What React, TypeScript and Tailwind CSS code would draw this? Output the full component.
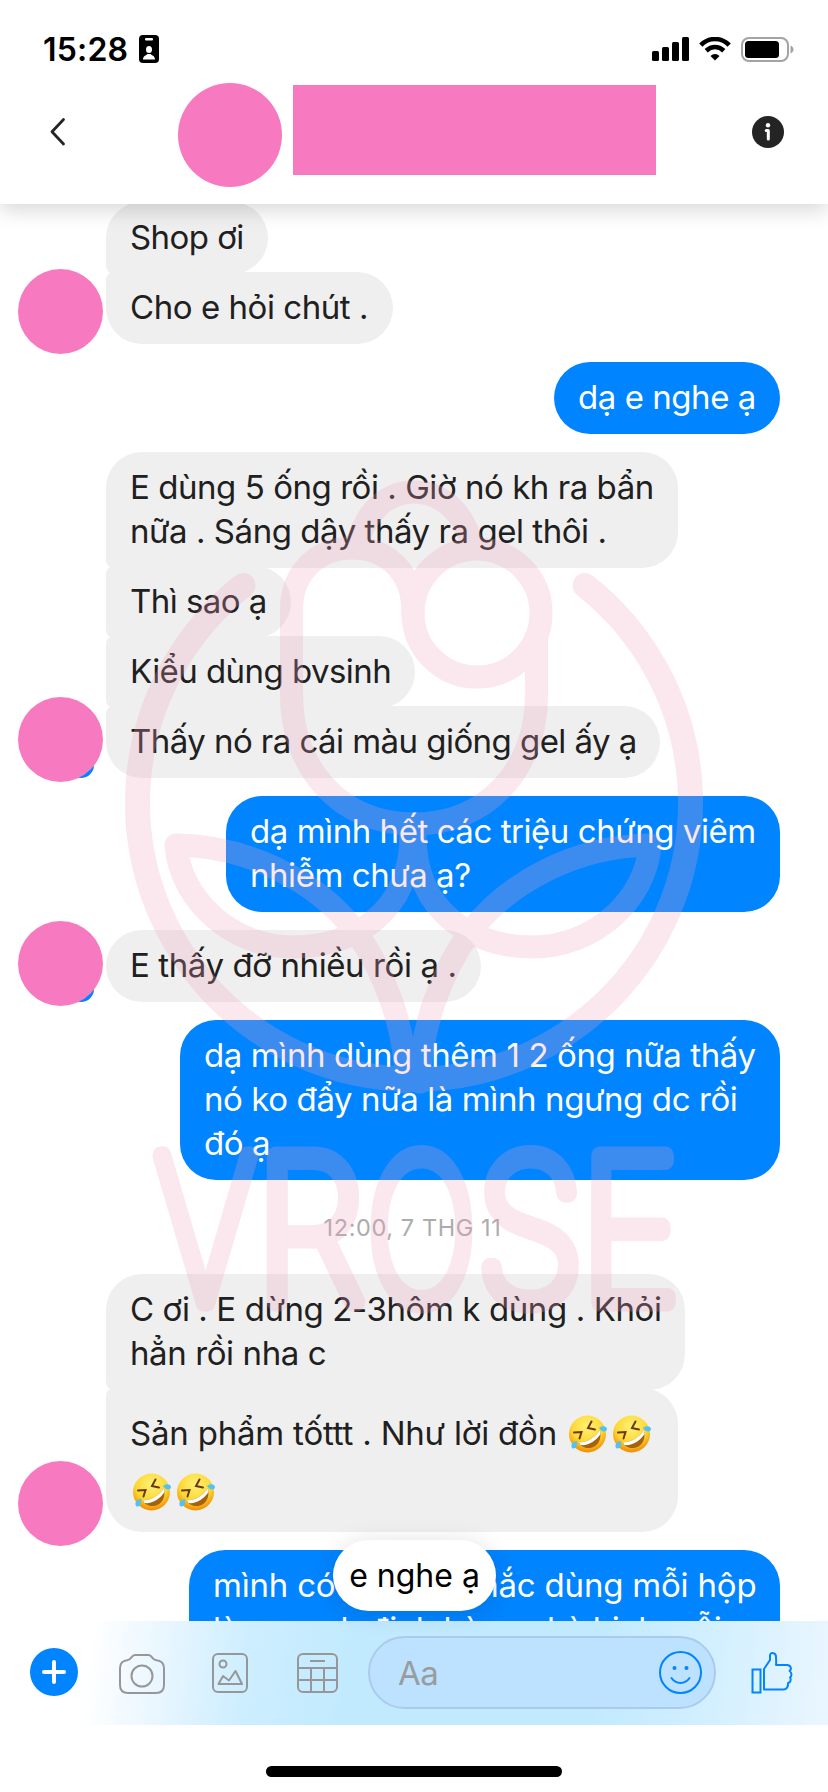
import type { ReactNode } from "react";
import clsx from "clsx";

// ─── MESSAGE DATA ──────────────────────────────────────────────────────────
// width    → bubble width, as a full Tailwind class
// tracking → letter spacing of the bubble's text
type Message = { lines: ReactNode[]; width: string; tracking?: string; tall?: boolean };
type Group = { messages: Message[]; avatar: string; badge?: boolean };

const FIRST: Group = {
  avatar: "-bottom-[10px]",
  messages: [
    { lines: ["Shop ơi"], width: "w-[162px]", tracking: "tracking-[-0.550px]" },
    { lines: ["Cho e hỏi chút ."], width: "w-[287px]" },
  ],
};

const SECOND: Group = {
  avatar: "-bottom-[4px]",
  badge: true,
  messages: [
    {
      lines: ["E dùng 5 ống rồi . Giờ nó kh ra bẩn", "nữa . Sáng dậy thấy ra gel thôi ."],
      width: "w-[572px]",
    },
    { lines: ["Thì sao ạ"], width: "w-[185px]", tracking: "tracking-[-0.550px]" },
    { lines: ["Kiểu dùng bvsinh"], width: "w-[309px]", tracking: "tracking-[-0.550px]" },
    { lines: ["Thấy nó ra cái màu giống gel ấy ạ"], width: "w-[554px]", tracking: "tracking-[-0.550px]" },
  ],
};

const THIRD: Group = {
  avatar: "-bottom-[4px]",
  badge: true,
  messages: [{ lines: ["E thấy đỡ nhiều rồi ạ ."], width: "w-[375px]", tracking: "tracking-[-0.400px]" }],
};

const FOURTH: Group = {
  avatar: "-bottom-[14px]",
  messages: [
    {
      lines: ["C ơi . E dừng 2-3hôm k dùng . Khỏi", "hẳn rồi nha c"],
      width: "w-[579px]",
      tracking: "tracking-[-0.400px]",
    },
    {
      lines: [
        <>
          Sản phẩm tốttt . Như lời đồn <Rofl />
          <Rofl />
        </>,
        <>
          <Rofl />
          <Rofl />
        </>,
      ],
      width: "w-[572px]",
      tracking: "tracking-[-0.200px]",
      tall: true,
    },
  ],
};

// ─── EMOJI ─────────────────────────────────────────────────────────────────
function Rofl() {
  return (
    <svg viewBox="0 0 40 40" className="mr-[2px] ml-[2px] inline-block size-10 align-[-9px]" aria-label="🤣">
      <defs>
        <radialGradient id="face" cx="0.5" cy="0.3" r="0.7">
          <stop offset="0" stopColor="#fff27a" />
          <stop offset="0.6" stopColor="#fdd835" />
          <stop offset="1" stopColor="#f08c00" />
        </radialGradient>
      </defs>
      <circle cx="19.5" cy="20" r="18.5" fill="url(#face)" />
      <path d="M11 28 C18 29 27 24 32 16 C34 25 30 33 22 34 C17 34.500 12 32 11 28Z" fill="#a5620c" />
      <path d="M11 28 C18 29 27 24 32 16 L32.500 20 C28 27 20 32 12.500 31Z" fill="#fff" />
      <path d="M6 18.500 L13.500 18 L11.500 24.500" fill="none" stroke="#6b3a06" strokeWidth="2" strokeLinecap="round" />
      <path d="M23.500 7.500 L20 14 L27 15.500" fill="none" stroke="#6b3a06" strokeWidth="2" strokeLinecap="round" />
      <path d="M31 14 C34 11 39 12 39 15 C39 18 34 19 31 14Z" fill="#4fc3f7" />
      <path d="M9 27 C5 27 2 31 4 34 C7 36 10 32 9 27Z" fill="#4fc3f7" />
    </svg>
  );
}

// ─── BUBBLES ───────────────────────────────────────────────────────────────
function Bubble({ message, mine, className }: { message: Message; mine?: boolean; className?: string }) {
  return (
    <div
      className={clsx(
        "shrink-0 pl-6 whitespace-nowrap text-[33px]",
        message.width,
        message.tracking ?? "tracking-[-0.450px]",
        message.tall ? "pt-[16px] pb-[12px] leading-[58px]" : "pt-[13px] pb-[15px] leading-[44px]",
        mine ? "self-end bg-[#0084ff] text-white" : "bg-[#efefef] text-[#202020]",
        className,
      )}
    >
      {message.lines.map((line, i) => (
        <div key={i} className={message.tall ? "h-[58px]" : "h-[44px]"}>
          {line}
        </div>
      ))}
    </div>
  );
}

function Received({ group, className }: { group: Group; className?: string }) {
  const last = group.messages.length - 1;
  return (
    <div className={clsx("relative flex shrink-0 flex-col items-start pl-[106px]", className)}>
      {group.messages.map((m, i) => (
        <Bubble
          key={i}
          message={m}
          className={clsx(
            "rounded-r-[36px]",
            i > 0 ? "-mt-[2px] rounded-tl-[8px]" : "rounded-tl-[36px]",
            i < last ? "rounded-bl-[8px]" : "rounded-bl-[36px]",
          )}
        />
      ))}
      {group.badge && <span className="absolute bottom-0 left-[68px] size-[26px] rounded-full bg-[#0084ff]" />}
      <span className={clsx("absolute left-[18px] size-[85px] rounded-full bg-[#f77ac1]", group.avatar)} />
    </div>
  );
}

function Sent({ message, className }: { message: Message; className?: string }) {
  return <Bubble message={message} mine className={clsx("mr-12 rounded-[36px]", className)} />;
}

// ─── STATUS BAR ────────────────────────────────────────────────────────────
function StatusBar() {
  return (
    <div className="flex h-[62px] items-end justify-between pr-[34px] pl-[43px]">
      <div className="flex items-end gap-[11px]">
        <span className="-mb-[7px] w-[85px] text-[32px] leading-[38px] font-semibold tracking-[0.200px] text-black">15:28</span>
        <svg width="20" height="28" viewBox="0 0 20 28" className="-mb-[1px]">
          <rect width="20" height="28" rx="4" fill="#000" />
          <rect x="6" y="3" width="8" height="2.500" rx="1" fill="#fff" />
          <ellipse cx="10" cy="14.500" rx="3" ry="3.500" fill="#fff" />
          <path d="M4 24.500 C4 21 7 20.500 8.500 19 H11.500 C13 20.500 16 21 16 24.500Z" fill="#fff" />
        </svg>
      </div>
      <div className="flex items-end gap-[10px]">
        <svg width="37" height="24" viewBox="0 0 37 24" className="mb-[1px]">
          <rect x="0" y="14" width="7" height="10" rx="1.500" />
          <rect x="10" y="10" width="7" height="14" rx="1.500" />
          <rect x="20" y="5" width="7" height="19" rx="1.500" />
          <rect x="30" y="0" width="7" height="24" rx="1.500" />
        </svg>
        <svg width="32" height="24" viewBox="0 0 32 24" className="mb-[1px]" fill="none" stroke="#000">
          <path d="M1.800 8.200 C10 0 22 0 30.200 8.200" strokeWidth="4.600" />
          <path d="M7.200 13.700 C12.500 8.800 19.500 8.800 24.800 13.700" strokeWidth="4.600" />
          <path d="M11.500 19 C14 16.300 18 16.300 20.500 19 L16 23.500Z" fill="#000" stroke="none" />
        </svg>
        <svg width="53" height="25" viewBox="0 0 53 25">
          <rect x="1" y="1" width="46" height="23" rx="7" fill="none" stroke="#a3a3a3" strokeWidth="2" />
          <rect x="4" y="4" width="34" height="17" rx="3.500" />
          <path d="M49.500 8.500 C53.500 10 53.500 15 49.500 16.500Z" fill="#a3a3a3" />
        </svg>
      </div>
    </div>
  );
}

// ─── HEADER ────────────────────────────────────────────────────────────────
function Header() {
  return (
    <header className="relative z-10 h-[204px] bg-white shadow-[0_6px_20px_rgba(0,0,0,0.16)]">
      <StatusBar />
      <div className="flex h-[142px] items-start">
        <svg width="18" height="30" viewBox="0 0 18 30" className="mt-[55px] ml-[49px]" fill="none" stroke="#242424" strokeWidth="2.800" strokeLinecap="round" strokeLinejoin="round">
          <path d="M14.500 2.500 L3 14.700 L14.500 27" />
        </svg>
        <span className="mt-[21px] ml-[111px] size-[104px] rounded-full bg-[#f77ac1]" />
        <span className="mt-[23px] ml-[11px] h-[90px] w-[363px] bg-[#f77ac1]" />
        <svg width="32" height="32" viewBox="0 0 32 32" className="mt-[54px] ml-[96px]">
          <circle cx="16" cy="16" r="16" fill="#242424" />
          <circle cx="16" cy="9.300" r="2.200" fill="#fff" />
          <path d="M14.200 14.500 H16.300 V23" fill="none" stroke="#fff" strokeWidth="3" strokeLinecap="round" strokeLinejoin="round" />
        </svg>
      </div>
    </header>
  );
}

// ─── WATERMARK ─────────────────────────────────────────────────────────────
// Rose emblem with the brand name under it, laid over the conversation.
const HALF_LEAF =
  "M176 845 C250 846 318 882 356 932 C385 972 406 1030 406 1082 M176 845 C180 900 232 947 293 947 C350 947 411 915 411 835";

function Watermark() {
  return (
    <svg viewBox="0 0 828 1792" className="pointer-events-none absolute top-0 left-0 z-[5] h-[1792px] w-[828px] opacity-25">
      <g fill="none" stroke="#f0a2be" strokeWidth="23" strokeLinecap="round" strokeLinejoin="round">
        <path d="M243 585.500 A276.500 276.500 0 1 0 585 585.500" strokeWidth="25" />
        <path d="M357 545 C366 510 388 492 414 492 C440 492 463 510 472 545" strokeLinecap="butt" />
        <path d="M413 612 C413 570 385 548 352 548 C318 548 291.500 572 291.500 610 V695 C291.500 768 340 824 414 824 C488 824 536.500 768 536.500 695 V652" />
        <path d="M536.500 660 V632" strokeLinecap="butt" />
        <circle cx="477" cy="613" r="64" />
        <path d={HALF_LEAF} />
        <path d={HALF_LEAF} transform="matrix(-1 0 0 1 826 0)" />
        <path d="M406 1040 H420 L417 1085 H409Z" fill="#f0a2be" strokeWidth="6" />
      </g>
      <text y="1301.500" fill="#f0a2be" stroke="#f0a2be" strokeWidth="19" strokeLinejoin="round" className="text-[200px] font-thin">
        <tspan x="155" textLength="101" lengthAdjust="spacingAndGlyphs">V</tspan>
        <tspan x="255" textLength="110" lengthAdjust="spacingAndGlyphs">R</tspan>
        <tspan x="367" textLength="109" lengthAdjust="spacingAndGlyphs">O</tspan>
        <tspan x="476" textLength="108" lengthAdjust="spacingAndGlyphs">S</tspan>
        <tspan x="580" textLength="100" lengthAdjust="spacingAndGlyphs">E</tspan>
      </text>
    </svg>
  );
}

// ─── COMPOSER ──────────────────────────────────────────────────────────────
function Composer() {
  return (
    <div className="relative z-10 flex h-[104px] items-start bg-[linear-gradient(97deg,#ffffff_0%,#ffffff_11%,#e8f6ff_20%,#cdeeff_30%,#c2eaff_42%,#c2eaff_72%,#d0efff_84%,#eaf6ff_100%)]">
      <span className="mt-[27px] ml-[30px] flex size-12 items-center justify-center rounded-full bg-[#0084ff]">
        <svg width="24" height="24" viewBox="0 0 24 24" stroke="#fff" strokeWidth="4" strokeLinecap="round">
          <path d="M2 12 H22 M12 2 V22" />
        </svg>
      </span>
      <svg width="46" height="40" viewBox="0 0 46 40" className="mt-[33px] ml-[41px]" fill="none" stroke="#979797" strokeWidth="2">
        <path d="M9 6 C12 6 12.500 1 16 1 H29.500 C33 1 33.500 6 36.500 6 C42 6.500 45 9.500 45 14 V31 C45 36 42 39 37 39 H9 C4 39 1 36 1 31 V14 C1 9.500 4 6.500 9 6Z" />
        <circle cx="23" cy="22" r="10.500" />
      </svg>
      <svg width="36" height="40" viewBox="0 0 36 40" className="mt-[32px] ml-[47px]" fill="none" stroke="#979797" strokeWidth="2" strokeLinejoin="round">
        <rect x="1" y="1" width="34" height="38" rx="5" />
        <circle cx="11" cy="11" r="3.500" />
        <path d="M6.500 31 L11 23 L17 27.500 L23.500 18 L30 31Z" />
      </svg>
      <svg width="41" height="40" viewBox="0 0 41 40" className="mt-[32px] ml-[49px]" fill="none" stroke="#979797" strokeWidth="2">
        <rect x="1" y="1" width="39" height="38" rx="5" />
        <path d="M1 15 H40 M1 27 H40 M14 15 V39 M27 15 V39 M13 8 H28" />
      </svg>
      <div className="mt-[15px] ml-[30px] flex h-[73px] w-[348px] items-center justify-between rounded-full border-2 border-[#aecaeb] bg-[#bce2ff] pr-[12px] pl-[28px]">
        <span className="text-[33px] leading-[40px] tracking-[-0.500px] text-[#999c9f]">Aa</span>
        <svg width="43" height="43" viewBox="0 0 43 43" fill="none" stroke="#0084ff" strokeWidth="2" strokeLinecap="round">
          <circle cx="21.500" cy="21.500" r="20.500" />
          <circle cx="15.500" cy="17" r="2" fill="#0084ff" stroke="none" />
          <circle cx="27.500" cy="17" r="2" fill="#0084ff" stroke="none" />
          <path d="M12.500 27 C17 33.500 26 33.500 30.500 27" />
        </svg>
      </div>
      <svg width="42" height="43" viewBox="0 0 42 43" className="mt-[30px] ml-[35px]" fill="none" stroke="#0084ff" strokeWidth="2" strokeLinejoin="round">
        <path d="M1.500 18.500 H9.500 V41.500 H1.500Z" strokeLinejoin="miter" />
        <path d="M13 38.500 V18 L19 9 V4.500 C19 1 24.500 1 25 5.500 C25 9 25.500 11 25 14 H36 C40 14 41 18 38.500 20 C41 21.500 41 25 39 26.500 C40.500 28.500 39.500 31.500 37 32 C37.500 35.500 35.500 38.500 32.500 38.500Z" />
      </svg>
    </div>
  );
}

export default function App() {
  return (
    <div className="relative h-[1792px] w-[828px] overflow-hidden bg-white font-['Inter','Noto_Sans',sans-serif]">
      <Header />

      {/* ─── CONVERSATION ────────────────────────────────────────────── */}
      <main className="flex h-[1417px] flex-col overflow-hidden">
        <Received group={FIRST} className="-mt-[2px]" />
        <Sent message={{ lines: ["dạ e nghe ạ"], width: "w-[226px]" }} className="mt-[18px]" />
        <Received group={SECOND} className="mt-[18px]" />
        <Sent
          message={{ lines: ["dạ mình hết các triệu chứng viêm", "nhiễm chưa ạ?"], width: "w-[554px]" }}
          className="mt-[18px]"
        />
        <Received group={THIRD} className="mt-[18px]" />
        <Sent
          message={{
            lines: ["dạ mình dùng thêm 1 2 ống nữa thấy", "nó ko đẩy nữa là mình ngưng dc rồi", "đó ạ"],
            width: "w-[600px]",
            tracking: "tracking-[-0.400px]",
          }}
          className="mt-[18px]"
        />
        <p className="mt-[32px] h-[62px] shrink-0 pr-[3px] text-center text-[23.500px] leading-[32px] tracking-[0.600px] text-[#acacac]">
          12:00, 7 THG 11
        </p>
        <Received group={FOURTH} />
        <Sent
          message={{
            lines: [
              <span className="tracking-[-0.200px]">mình có dặn dò nhắc dùng mỗi hộp</span>,
              "là mua nh định hàng nhà hinh mỗi",
            ],
            width: "w-[591px]",
            tracking: "tracking-[-0.500px]",
          }}
          className="mt-[18px]"
        />
      </main>

      <Composer />

      {/* ─── HOME INDICATOR ──────────────────────────────────────────── */}
      <div className="mx-auto mt-[41px] h-[11px] w-[296px] rounded-full bg-black" />

      <Watermark />

      {/* ─── TYPING PREVIEW ──────────────────────────────────────────── */}
      <div className="absolute top-[1540px] left-[333px] z-20 flex h-[71px] w-[163px] items-center justify-center rounded-full bg-white text-[32px] leading-[40px] whitespace-nowrap text-black shadow-[0_2px_24px_rgba(0,0,0,0.12)]">
        e nghe ạ
      </div>
    </div>
  );
}
